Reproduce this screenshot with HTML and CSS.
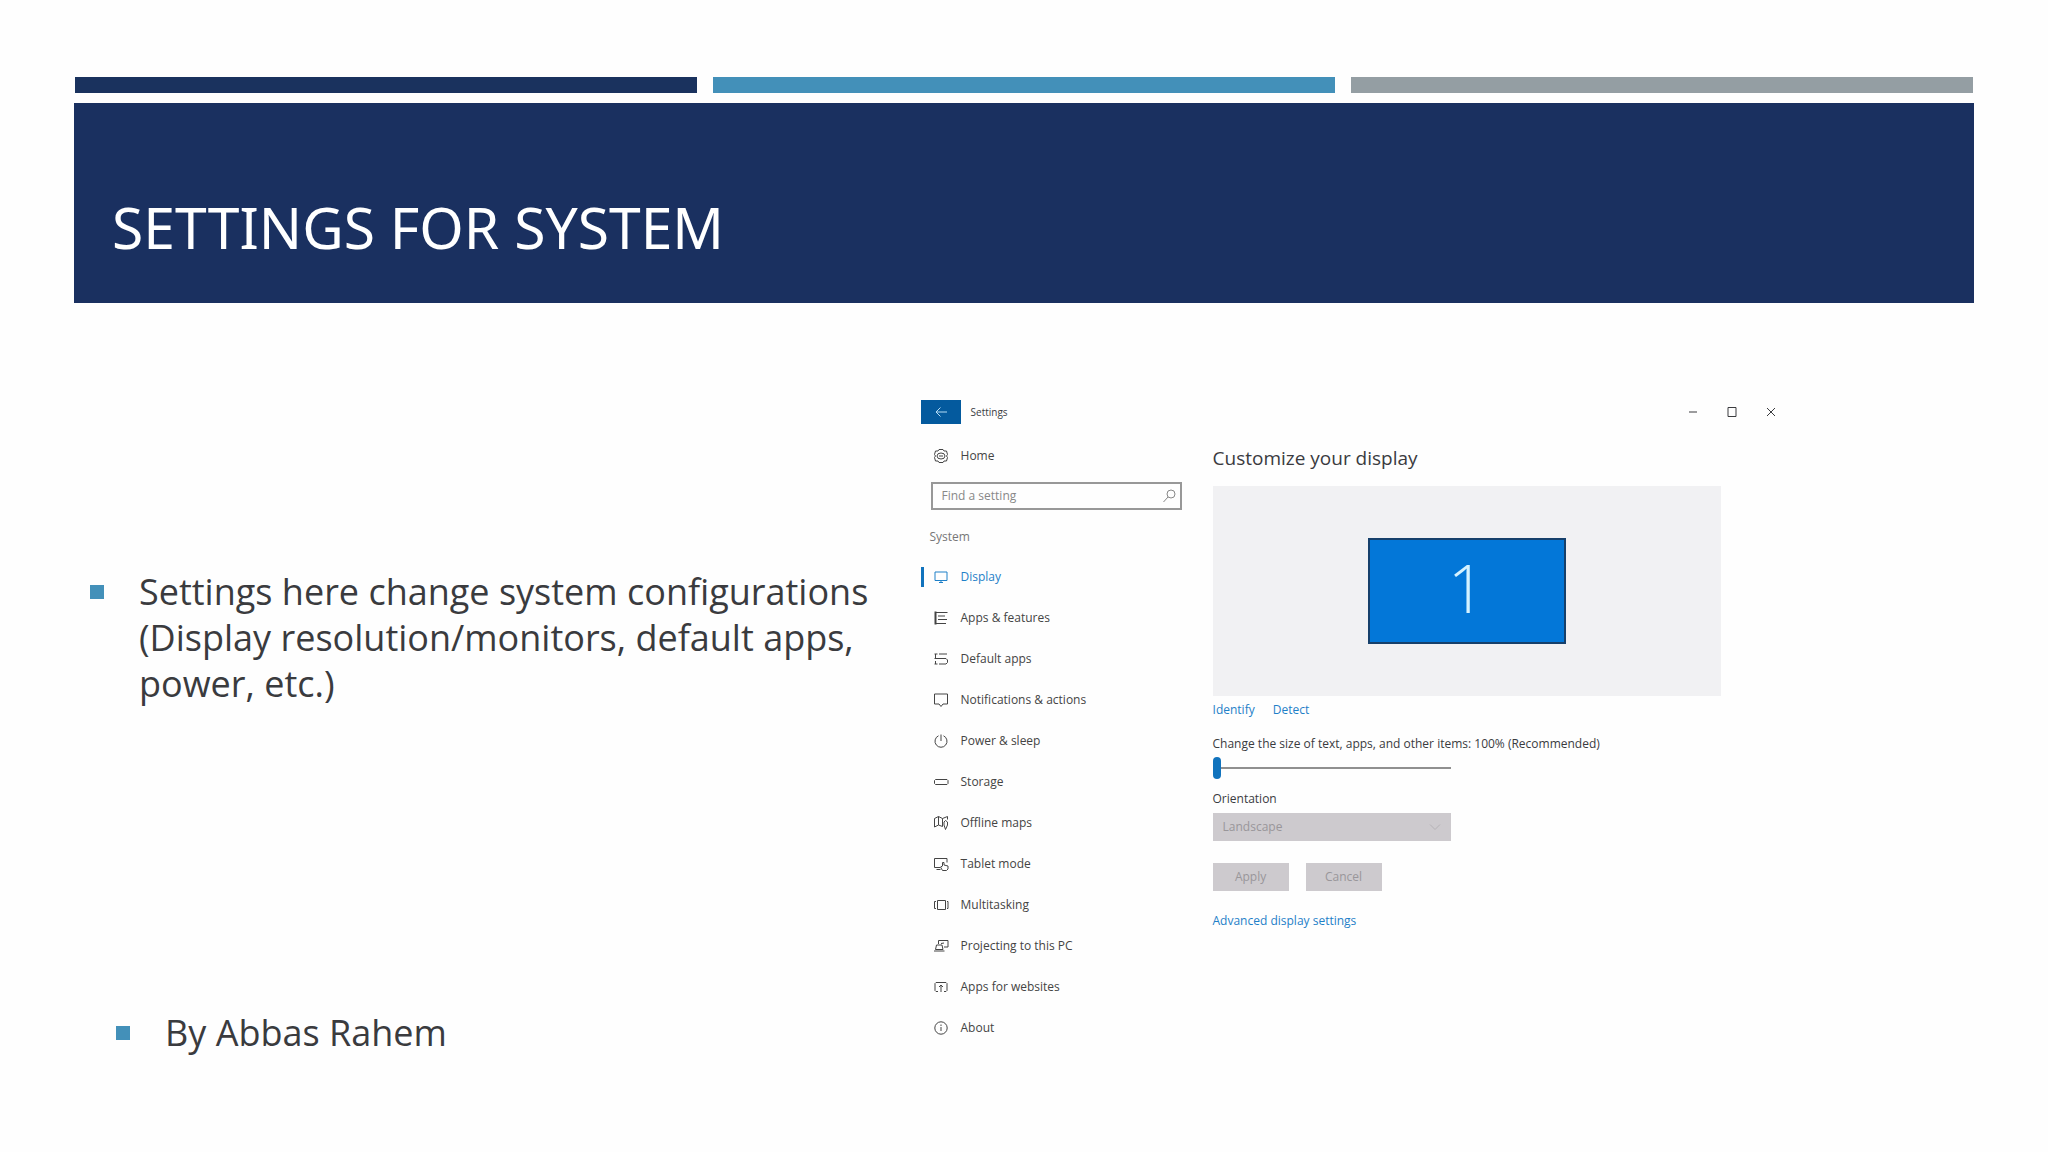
FILE: index.html
```html
<!DOCTYPE html>
<html lang="en">
<head>
    <meta charset="utf-8">
    <title>Settings for System</title>
    <link rel="stylesheet" href="styles.css">
</head>
<body>
    <div class="slide">
        <div class="stripes">
            <div class="stripe navy"></div>
            <div class="stripe blue"></div>
            <div class="stripe gray"></div>
        </div>
        <header class="banner">
            <h1>Settings for System</h1>
        </header>

        <div class="content">
            <div class="notes">
                <ul class="bullets">
                    <li>Settings here change system configurations (Display resolution/monitors, default apps, power, etc.)</li>
                </ul>
                <ul class="bullets author">
                    <li>By Abbas Rahem</li>
                </ul>
            </div>

            <section class="window">
                <div class="titlebar">
                    <button class="back" type="button" aria-label="Back">
                        <svg class="icon" viewBox="0 0 16 16"><path d="M14 8H3M7.500 3.500L3 8l4.500 4.500"/></svg>
                    </button>
                    <span class="window-title">Settings</span>
                    <div class="window-buttons">
                        <button type="button" aria-label="Minimize"><svg class="icon" viewBox="0 0 16 16"><path d="M4 8h8"/></svg></button>
                        <button type="button" aria-label="Maximize"><svg class="icon" viewBox="0 0 16 16"><path d="M4 3.500h8v9H4z"/></svg></button>
                        <button type="button" aria-label="Close"><svg class="icon" viewBox="0 0 16 16"><path d="M4 4l8 8M12 4l-8 8"/></svg></button>
                    </div>
                </div>

                <div class="panes">
                    <nav class="sidebar">
                        <a class="item" href="#">
                            <svg class="icon" viewBox="0 0 16 16"><path d="M6 1.500h4l1 1.500h2.500l1 3.500-1 1.500 1 1.500-1 3.500H11l-1 1.500H6L5 13H2.500l-1-3.500 1-1.500-1-1.500 1-3.500H5z"/><ellipse cx="8" cy="8" rx="4" ry="3"/><path d="M6 8h4"/></svg>
                            Home
                        </a>
                        <div class="search">
                            <input type="text" placeholder="Find a setting" aria-label="Find a setting">
                            <svg class="icon" viewBox="0 0 16 16"><circle cx="11" cy="6" r="4"/><path d="M8 9l-4.500 5"/></svg>
                        </div>
                        <h2>System</h2>
                        <a class="item active" href="#">
                            <svg class="icon" viewBox="0 0 16 16"><path d="M2 3h12v8.500H2zM6 13.500h4M8 11.500v2"/></svg>
                            Display
                        </a>
                        <a class="item" href="#">
                            <svg class="icon" viewBox="0 0 16 16"><path d="M2.500 1.500v13" stroke-width="2"/><path d="M2 2.500h12.500M5 6h7M5 9.500h9M2 13.500h11"/></svg>
                            Apps &amp; features
                        </a>
                        <a class="item" href="#">
                            <svg class="icon" viewBox="0 0 16 16"><path d="M1.500 3h3M6 3h8M2.500 3v4M1.500 7.500H13l1.500 1.500v2.500L13 13H6M1.500 13h3M2.500 10v3"/></svg>
                            Default apps
                        </a>
                        <a class="item" href="#">
                            <svg class="icon" viewBox="0 0 16 16"><path d="M1.500 2h13v10H10l-2 2.500L6 12H1.500z"/></svg>
                            Notifications &amp; actions
                        </a>
                        <a class="item" href="#">
                            <svg class="icon" viewBox="0 0 16 16"><path d="M5.500 2.800a6 6 0 1 0 5 0M8 1.500V8"/></svg>
                            Power &amp; sleep
                        </a>
                        <a class="item" href="#">
                            <svg class="icon" viewBox="0 0 16 16"><path d="M2.500 5.500h11.500l1 1v3l-1 1H2.500l-1-1v-3z"/></svg>
                            Storage
                        </a>
                        <a class="item" href="#">
                            <svg class="icon" viewBox="0 0 16 16"><path d="M9.500 11.500l-4-1.500-4 2V3.500l4-2 4 2 5-2v3M5.500 1.500V10M9.500 3.500v8"/><path d="M12.500 14.500L11 10V7l1.500-1.500L14.500 7v3z"/></svg>
                            Offline maps
                        </a>
                        <a class="item" href="#">
                            <svg class="icon" viewBox="0 0 16 16"><path d="M7 11.500H1.500v-9h12.500v4M3.500 13.500h4"/><path d="M9.500 10V6.500H11V9l4 1v3l-1.500 1.500h-4L7.500 11z"/></svg>
                            Tablet mode
                        </a>
                        <a class="item" href="#">
                            <svg class="icon" viewBox="0 0 16 16"><path d="M4.500 3.500h8v9h-8zM3 4.500H1.500v7H3M14 4.500h1v7h-1"/></svg>
                            Multitasking
                        </a>
                        <a class="item" href="#">
                            <svg class="icon" viewBox="0 0 16 16"><path d="M5.500 6V2.500h9.500v6.500h-4M1 13h10.500M2.500 11.500l1-4.500h5.500l1 4.500zM8 5.500L11 5"/></svg>
                            Projecting to this PC
                        </a>
                        <a class="item" href="#">
                            <svg class="icon" viewBox="0 0 16 16"><path d="M5 12.500H3l-1-1v-7l1-1h10l1 1v7l-1 1h-2M8 6v7M6 8l2-2 2 2"/></svg>
                            Apps for websites
                        </a>
                        <a class="item" href="#">
                            <svg class="icon" viewBox="0 0 16 16"><circle cx="8" cy="8" r="6.200"/><path d="M8 7v4M8 4.500V6"/></svg>
                            About
                        </a>
                    </nav>

                    <div class="display">
                        <h2>Customize your display</h2>
                        <div class="preview">
                            <div class="monitor">1</div>
                        </div>
                        <div class="links">
                            <a href="#">Identify</a>
                            <a href="#">Detect</a>
                        </div>
                        <label for="scale">Change the size of text, apps, and other items: 100% (Recommended)</label>
                        <input class="slider" type="range" id="scale" min="0" max="100" value="0">
                        <label for="orientation">Orientation</label>
                        <div class="dropdown">
                            <select id="orientation" disabled>
                                <option>Landscape</option>
                            </select>
                            <svg class="icon" viewBox="0 0 16 16"><path d="M3 5.500l5 5 5-5"/></svg>
                        </div>
                        <div class="actions">
                            <button type="button" disabled>Apply</button>
                            <button type="button" disabled>Cancel</button>
                        </div>
                        <a class="advanced" href="#">Advanced display settings</a>
                    </div>
                </div>
            </section>
        </div>
    </div>
</body>
</html>
```
FILE: styles.css
```css
* {
    box-sizing: border-box;
}
body {
    margin: 0;
    font-family: "Open Sans", "Noto Sans", sans-serif;
    color: #3a3b3e;
    background-color: #fefefe;
}
a {
    color: #1f80c8;
    text-decoration: none;
}
button, input, select {
    font: inherit;
    color: inherit;
    margin: 0;
    padding: 0;
    border: none;
    background: none;
}
.slide {
    padding: 77px 74px 0;
}

/* Three colour bars and the title banner */
.stripes {
    display: grid;
    grid-template-columns: repeat(3, 1fr);
    gap: 16px;
    padding: 0 1px;
    margin-bottom: 10px;
}
.stripe {
    height: 16px;
}
.navy {
    background-color: #1a325e;
}
.blue {
    background-color: #4390b9;
}
.gray {
    background-color: #949ea3;
}
.banner {
    height: 200px;
    display: flex;
    align-items: flex-end;
    padding: 0 38px 36px;
    background-color: #1a3060;
}
h1 {
    margin: 0;
    font-family: "Noto Sans", "Open Sans", sans-serif;
    font-size: 57px;
    line-height: 80px;
    font-weight: normal;
    text-transform: uppercase;
    color: #fff;
}

.content {
    display: grid;
    grid-template-columns: 45fr 56fr;
    padding-top: 97px;
}
.notes {
    display: flex;
    flex-direction: column;
    justify-content: space-between;
    padding: 169px 40px 0 16px;
}
.bullets {
    margin: 0;
    padding: 0;
    list-style: none;
    font-size: 36px;
    line-height: 46px;
}
.bullets li {
    display: flex;
    gap: 35px;
}
.bullets li::before {
    content: "";
    flex: none;
    width: 14px;
    height: 14px;
    margin-top: 16px;
    background-color: #4390b9;
}
.author {
    padding-left: 26px;
}

/* Settings window */
.window {
    max-width: 870px;
    padding-bottom: 8px;
    font-size: 12px;
    line-height: 20px;
}
.icon {
    flex: none;
    width: 16px;
    height: 16px;
    fill: none;
    stroke: currentColor;
}
.titlebar {
    display: flex;
    align-items: center;
    height: 24px;
}
.back {
    display: flex;
    align-items: center;
    justify-content: center;
    width: 40px;
    height: 24px;
    color: #b5dcf5;
    background-color: #045a9e;
}
.window-title {
    margin-left: 10px;
    font-size: 10px;
}
.window-buttons {
    display: flex;
    margin-left: auto;
}
.window-buttons button {
    display: flex;
    align-items: center;
    justify-content: center;
    width: 39px;
    height: 24px;
}
.panes {
    display: grid;
    grid-template-columns: 261px 1fr;
    gap: 31px;
}

.sidebar {
    padding-top: 11px;
}
.item {
    display: flex;
    align-items: center;
    gap: 12px;
    height: 41px;
    padding-left: 12px;
    color: #444;
}
.item.active {
    color: #1f80c8;
    background: linear-gradient(#1173bd, #1173bd) 0 50% / 3px 20px no-repeat;
}
.search {
    display: flex;
    align-items: center;
    height: 28px;
    margin: 6px 0 0 10px;
    padding: 0 4px 0 9px;
    border: 2px solid #989898;
    color: #888;
}
.search input {
    flex: 1;
    min-width: 0;
    outline: none;
}
.search input::placeholder {
    color: #888;
}
.sidebar h2 {
    margin: 17px 0 9px 9px;
    font-size: 12px;
    line-height: 20px;
    font-weight: normal;
    color: #777;
}

.display {
    display: flex;
    flex-direction: column;
    align-items: flex-start;
    padding-top: 20px;
}
.display h2 {
    margin: 0 0 14px;
    font-size: 19px;
    line-height: 28px;
    font-weight: normal;
}
.preview {
    display: flex;
    align-items: center;
    justify-content: center;
    width: 508px;
    max-width: 100%;
    height: 210px;
    background-color: #f1f1f3;
}
.monitor {
    width: 198px;
    height: 106px;
    border: 2px solid #16406b;
    background-color: #0377d8;
    color: #d5f2ff;
    font-size: 66px;
    line-height: 94px;
    font-weight: 300;
    text-align: center;
}
.links {
    display: flex;
    gap: 18px;
    margin: 4px 0 14px;
}
.slider {
    appearance: none;
    width: 238px;
    height: 22px;
    margin: 3px 0 10px;
    background: linear-gradient(#909090, #909090) 0 50% / 100% 2px no-repeat;
}
.slider::-webkit-slider-thumb {
    appearance: none;
    width: 8px;
    height: 22px;
    border-radius: 4px;
    background-color: #1173bd;
}
.dropdown {
    display: flex;
    align-items: center;
    width: 238px;
    height: 28px;
    margin: 4px 0 22px;
    padding: 0 8px 0 10px;
    background-color: #cdcace;
    color: #b5b2b6;
}
.dropdown select {
    appearance: none;
    flex: 1;
    color: #99969a;
    opacity: 1;
}
.actions {
    display: flex;
    gap: 17px;
    margin-bottom: 20px;
}
.actions button {
    width: 76px;
    height: 28px;
    background-color: #cdcace;
    color: #99969a;
}
```
